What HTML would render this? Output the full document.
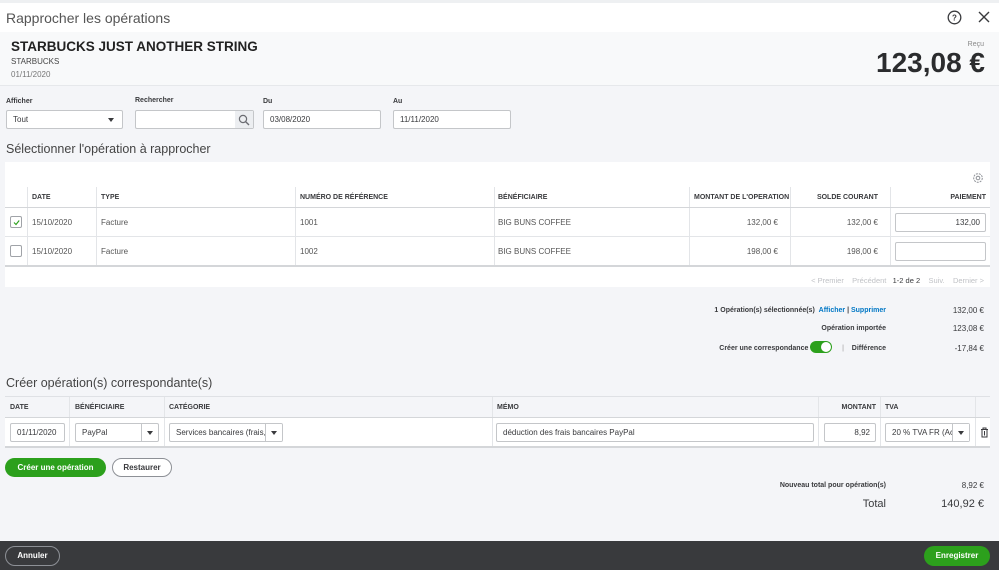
<!DOCTYPE html>
<html><head><meta charset="utf-8"><style>
*{box-sizing:border-box;margin:0;padding:0}
body{width:999px;height:570px;overflow:hidden;background:#f4f5f8;font-family:"Liberation Sans",sans-serif;color:#393a3d;position:relative}
.a{position:absolute;white-space:nowrap}
.inp{position:absolute;background:#fff;border:1px solid #c4c6c9;border-radius:2px;font-size:8px;padding-left:6px;display:flex;align-items:center;color:#393a3d}
.th{position:absolute;font-size:7px;font-weight:bold;color:#393a3d}
.td{position:absolute;font-size:8px;color:#555}
.vl{position:absolute;width:1px;background:#e3e5e8}
.hl{position:absolute;height:1px;background:#d4d6d9}
.arr{position:absolute;top:0;bottom:0;border-left:1px solid #c4c6c9;width:17px}
.arr:after{content:"";position:absolute;left:5px;top:7px;border-left:3px solid transparent;border-right:3px solid transparent;border-top:4px solid #393a3d}
.r{text-align:right}
.sl{position:absolute;right:113px;font-size:7px;font-weight:bold;height:12px;line-height:12px}
.sv{position:absolute;right:15px;font-size:8px;height:12px;line-height:12px}
</style></head><body>
<div class="a" style="left:0;top:0;width:999px;height:32px;background:#fff"></div>
<div class="a" style="left:0;top:0;width:999px;height:3px;background:#eef0f2"></div>
<div class="a" style="left:6px;top:10px;font-size:14px;color:#555">Rapprocher les opérations</div>
<svg class="a" style="left:947px;top:10px" width="15" height="15" viewBox="0 0 15 15"><circle cx="7.5" cy="7.5" r="6.3" fill="none" stroke="#393a3d" stroke-width="1.3"/><text x="7.5" y="10.5" font-size="8" font-weight="bold" text-anchor="middle" fill="#393a3d" font-family="Liberation Sans">?</text></svg>
<svg class="a" style="left:978px;top:11px" width="12" height="12" viewBox="0 0 12 12"><path d="M1 1L11 11M11 1L1 11" stroke="#393a3d" stroke-width="1.4"/></svg>
<div class="a" style="left:0;top:32px;width:999px;height:54px;background:#f8f9fa;border-bottom:1px solid #e6e8eb"></div>
<div class="a" style="left:11px;top:39px;font-size:13.5px;font-weight:bold;color:#222">STARBUCKS JUST ANOTHER STRING</div>
<div class="a" style="left:11px;top:57px;font-size:8px;color:#444">STARBUCKS</div>
<div class="a" style="left:11px;top:70px;font-size:8px;color:#777">01/11/2020</div>
<div class="a" style="right:15px;top:41px;font-size:7px;color:#888">Reçu</div>
<div class="a" style="right:14px;top:47px;font-size:28px;font-weight:bold;color:#2b2c2e">123,08 €</div>

<div class="a" style="left:6px;top:98px;font-size:7px;font-weight:bold">Afficher</div>
<div class="a" style="left:135px;top:97px;font-size:7px;font-weight:bold">Rechercher</div>
<div class="a" style="left:263px;top:98px;font-size:7px;font-weight:bold">Du</div>
<div class="a" style="left:393px;top:98px;font-size:7px;font-weight:bold">Au</div>
<div class="inp" style="left:6px;top:110px;width:117px;height:19px">Tout<span style="position:absolute;right:8px;top:7px;border-left:3px solid transparent;border-right:3px solid transparent;border-top:4px solid #393a3d"></span></div>
<div class="inp" style="left:135px;top:110px;width:119px;height:19px"><span style="position:absolute;right:0;top:0;bottom:0;width:18px;background:#eceef1"></span>
<svg style="position:absolute;right:3px;top:3px" width="12" height="12" viewBox="0 0 12 12"><circle cx="5" cy="5" r="3.6" fill="none" stroke="#6b6c72" stroke-width="1.2"/><path d="M7.6 7.6L11 11" stroke="#6b6c72" stroke-width="1.4"/></svg></div>
<div class="inp" style="left:263px;top:110px;width:118px;height:19px">03/08/2020</div>
<div class="inp" style="left:393px;top:110px;width:118px;height:19px">11/11/2020</div>
<div class="a" style="left:6px;top:142px;font-size:12.5px;color:#444">Sélectionner l'opération à rapprocher</div>

<div class="a" style="left:5px;top:162px;width:985px;height:125px;background:#fff"></div>
<svg class="a" style="left:972px;top:172px" width="12" height="12" viewBox="0 0 12 12"><circle cx="6" cy="6" r="4.3" fill="none" stroke="#8d9096" stroke-width="1" stroke-dasharray="2 1"/><circle cx="6" cy="6" r="1.8" fill="none" stroke="#8d9096"/></svg>
<div class="vl" style="left:27px;top:187px;height:79px"></div>
<div class="vl" style="left:96px;top:187px;height:79px"></div>
<div class="vl" style="left:295px;top:187px;height:79px"></div>
<div class="vl" style="left:494px;top:187px;height:79px"></div>
<div class="vl" style="left:689px;top:187px;height:79px"></div>
<div class="vl" style="left:790px;top:187px;height:79px"></div>
<div class="vl" style="left:890px;top:187px;height:79px"></div>
<div class="hl" style="left:5px;top:207px;width:985px"></div>
<div class="hl" style="left:5px;top:236px;width:985px;background:#e3e5e8"></div>
<div class="hl" style="left:5px;top:265px;width:985px;height:2px"></div>
<div class="th" style="left:32px;top:194px">DATE</div>
<div class="th" style="left:101px;top:194px">TYPE</div>
<div class="th" style="left:300px;top:194px">NUMÉRO DE RÉFÉRENCE</div>
<div class="th" style="left:498px;top:194px">BÉNÉFICIAIRE</div>
<div class="th" style="left:694px;top:194px;width:96px;overflow:hidden">MONTANT DE L'OPÉRATION</div>
<div class="th r" style="left:790px;top:194px;width:88px">SOLDE COURANT</div>
<div class="th r" style="left:890px;top:194px;width:96px">PAIEMENT</div>
<div class="a" style="left:10px;top:216px;width:12px;height:12px;border:1px solid #a0a3a8;border-radius:2px"><svg style="position:absolute;left:2px;top:2px" width="7" height="7" viewBox="0 0 7 7"><path d="M1 3.5L3 5.5L6.2 1.5" stroke="#2ca01c" fill="none" stroke-width="1.1"/></svg></div>
<div class="a" style="left:10px;top:245px;width:12px;height:12px;border:1px solid #a0a3a8;border-radius:2px"></div>
<div class="td" style="left:32px;top:218px">15/10/2020</div>
<div class="td" style="left:101px;top:218px">Facture</div>
<div class="td" style="left:300px;top:218px">1001</div>
<div class="td" style="left:498px;top:218px">BIG BUNS COFFEE</div>
<div class="td r" style="left:689px;top:218px;width:89px">132,00 €</div>
<div class="td r" style="left:790px;top:218px;width:88px">132,00 €</div>
<div class="inp" style="left:895px;top:213px;width:91px;height:19px;justify-content:flex-end;padding-right:5px">132,00</div>
<div class="td" style="left:32px;top:247px">15/10/2020</div>
<div class="td" style="left:101px;top:247px">Facture</div>
<div class="td" style="left:300px;top:247px">1002</div>
<div class="td" style="left:498px;top:247px">BIG BUNS COFFEE</div>
<div class="td r" style="left:689px;top:247px;width:89px">198,00 €</div>
<div class="td r" style="left:790px;top:247px;width:88px">198,00 €</div>
<div class="inp" style="left:895px;top:242px;width:91px;height:19px"></div>
<div class="a" style="right:15px;top:276px;font-size:7.5px;color:#c0c2c6">&lt; Premier &nbsp;&nbsp; Précédent &nbsp;&nbsp;<span style="color:#393a3d">1-2 de 2</span> &nbsp;&nbsp; Suiv. &nbsp;&nbsp; Dernier &gt;</div>

<div class="sl" style="top:305px">1 Opération(s) sélectionnée(s) &nbsp;<span style="color:#0077c5">Afficher</span> | <span style="color:#0077c5">Supprimer</span></div>
<div class="sv" style="top:305px">132,00 €</div>
<div class="sl" style="top:323px">Opération importée</div>
<div class="sv" style="top:323px">123,08 €</div>
<div class="sl" style="top:343px">Créer une correspondance <span style="display:inline-block;vertical-align:middle;width:22px;height:12px;border-radius:6px;background:#2ca01c;position:relative;margin:-2px 4px 0 0"><span style="position:absolute;right:1px;top:1px;width:10px;height:10px;border-radius:50%;background:#fff"></span></span> &nbsp;&nbsp;<span style="font-weight:normal;color:#999">|</span> &nbsp;&nbsp; Différence</div>
<div class="sv" style="top:343px">-17,84 €</div>

<div class="a" style="left:6px;top:376px;font-size:12.5px;color:#444">Créer opération(s) correspondante(s)</div>
<div class="a" style="left:5px;top:396px;width:985px;height:51px;background:#fff;border-top:1px solid #dfe1e5"></div>
<div class="a" style="left:5px;top:397px;width:985px;height:21px;background:#f4f5f8"></div>
<div class="vl" style="left:69px;top:397px;height:49px"></div>
<div class="vl" style="left:164px;top:397px;height:49px"></div>
<div class="vl" style="left:492px;top:397px;height:49px"></div>
<div class="vl" style="left:818px;top:397px;height:49px"></div>
<div class="vl" style="left:880px;top:397px;height:49px"></div>
<div class="vl" style="left:975px;top:397px;height:49px"></div>
<div class="hl" style="left:5px;top:417px;width:985px"></div>
<div class="hl" style="left:5px;top:446px;width:985px;height:2px"></div>
<div class="th" style="left:10px;top:404px">DATE</div>
<div class="th" style="left:75px;top:404px">BÉNÉFICIAIRE</div>
<div class="th" style="left:169px;top:404px">CATÉGORIE</div>
<div class="th" style="left:497px;top:404px">MÉMO</div>
<div class="th r" style="left:818px;top:404px;width:58px">MONTANT</div>
<div class="th" style="left:885px;top:404px">TVA</div>
<div class="inp" style="left:10px;top:423px;width:55px;height:19px">01/11/2020</div>
<div class="inp" style="left:75px;top:423px;width:84px;height:19px">PayPal<span class="arr" style="right:0"></span></div>
<div class="inp" style="left:169px;top:423px;width:114px;height:19px;overflow:hidden">Services bancaires (frais,<span class="arr" style="right:0;background:#fff"></span></div>
<div class="inp" style="left:496px;top:423px;width:318px;height:19px">déduction des frais bancaires PayPal</div>
<div class="inp" style="left:824px;top:423px;width:52px;height:19px;justify-content:flex-end;padding-right:5px">8,92</div>
<div class="inp" style="left:885px;top:423px;width:85px;height:19px">20 % TVA FR (Ac<span class="arr" style="right:0;background:#fff"></span></div>
<svg class="a" style="left:980px;top:427px" width="9" height="11" viewBox="0 0 9 11"><path d="M1 2.5H8M3 2.5V1H6V2.5M2 2.5V10H7V2.5M4.5 4V8.5" stroke="#393a3d" fill="none" stroke-width="1"/></svg>

<div class="a" style="left:5px;top:458px;width:101px;height:19px;border-radius:10px;background:#2ca01c;color:#fff;font-size:8px;font-weight:bold;text-align:center;line-height:19px">Créer une opération</div>
<div class="a" style="left:112px;top:458px;width:60px;height:19px;border-radius:10px;border:1px solid #8d9096;font-size:8px;font-weight:bold;text-align:center;line-height:17px;background:#fff">Restaurer</div>
<div class="sl" style="top:480px">Nouveau total pour opération(s)</div>
<div class="sv" style="top:480px">8,92 €</div>
<div class="a" style="right:113px;top:498px;font-size:11px">Total</div>
<div class="a" style="right:15px;top:498px;font-size:11px">140,92 €</div>

<div class="a" style="left:0;top:541px;width:999px;height:29px;background:#393a3d"></div>
<div class="a" style="left:5px;top:546px;width:55px;height:20px;border-radius:10px;border:1px solid #8d9096;color:#fff;font-size:8px;font-weight:bold;text-align:center;line-height:18px">Annuler</div>
<div class="a" style="left:924px;top:546px;width:66px;height:20px;border-radius:10px;background:#2ca01c;color:#fff;font-size:8px;font-weight:bold;text-align:center;line-height:20px">Enregistrer</div>
</body></html>
